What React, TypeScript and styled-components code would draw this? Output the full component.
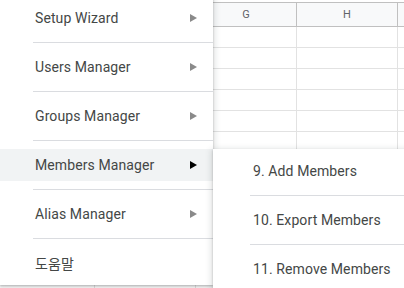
import styled, { createGlobalStyle } from 'styled-components';

const GlobalStyle = createGlobalStyle`
  html, body {
    margin: 0;
    padding: 0;
    background: #fff;
  }
  body {
    font-family: Roboto, "Noto Sans CJK KR", sans-serif;
  }
`;

// columns E and F sit under the menu and I is off to the right, so only G and H show a letter
const columns = ['', '', 'G', 'H', ''];
const rowCount = 14;

const mainItems = [
  { label: 'Setup Wizard', sub: true },
  { label: 'Users Manager', sub: true },
  { label: 'Groups Manager', sub: true },
  { label: 'Members Manager', sub: true, active: true },
  { label: 'Alias Manager', sub: true },
  { label: '도움말', sub: false },
];

const subItems = ['9. Add Members', '10. Export Members', '11. Remove Members'];

function App() {
  return (
    <>
      <GlobalStyle />
      <Page>
        <Sheet>
          <HeaderRow>
            {columns.map((c, i) => (
              <HeaderCell key={i}>{c}</HeaderCell>
            ))}
          </HeaderRow>
          {Array.from({ length: rowCount }).map((_, r) => (
            <Row key={r}>
              {columns.map((_c, i) => (
                <Cell key={i} />
              ))}
            </Row>
          ))}
        </Sheet>

        <Menu>
          {mainItems.map((item, i) => (
            <div key={item.label}>
              {i > 0 && <Separator inset={33} />}
              <Item active={item.active} pad={35}>
                <span>{item.label}</span>
                {item.sub && <Arrow active={item.active} />}
              </Item>
            </div>
          ))}
        </Menu>

        <SubMenu>
          {subItems.map((label, i) => (
            <div key={label}>
              {i > 0 && <Separator inset={37} />}
              <Item pad={40}>
                <span>{label}</span>
              </Item>
            </div>
          ))}
        </SubMenu>
      </Page>
    </>
  );
}

const Page = styled.div`
  position: relative;
  width: 404px;
  height: 288px;
  overflow: hidden;
  background: #fff;
`;

const Sheet = styled.div`
  padding-top: 2px;
  width: 600px;
`;

const gridCols = 'grid-template-columns: 95px 101px 101px 101px 101px;';

const HeaderRow = styled.div`
  display: grid;
  ${gridCols}
  height: 25px;
  box-sizing: border-box;
  border-top: 1px solid #c0c0c0;
  border-bottom: 1px solid #c0c0c0;
  background: #f8f9fa;
`;

const HeaderCell = styled.div`
  box-sizing: border-box;
  border-right: 1px solid #c0c0c0;
  display: flex;
  align-items: center;
  justify-content: center;
  font-size: 11px;
  color: #5f6368;
`;

const Row = styled.div`
  display: grid;
  ${gridCols}
  height: 21px;
  box-sizing: border-box;
  border-bottom: 1px solid #e2e2e2;
`;

const Cell = styled.div`
  box-sizing: border-box;
  border-right: 1px solid #e2e2e2;
`;

const menuShadow = `
  box-shadow: 0 1px 2px 0 rgba(60, 64, 67, 0.3), 0 2px 6px 2px rgba(60, 64, 67, 0.15);
`;

const Menu = styled.div`
  position: absolute;
  top: -4px;
  left: 0;
  width: 213px;
  padding: 6px 0;
  background: #fff;
  z-index: 1;
  ${menuShadow}
`;

const SubMenu = styled.div`
  position: absolute;
  top: 149px;
  left: 213px;
  width: 220px;
  padding: 6px 0;
  background: #fff;
  z-index: 2;
  ${menuShadow}
`;

const Item = styled.div<{ active?: boolean; pad: number }>`
  height: 32px;
  display: flex;
  align-items: center;
  justify-content: space-between;
  padding: 0 16px 0 ${({ pad }) => pad}px;
  font-size: 14px;
  letter-spacing: 0.1px;
  color: #444746;
  background: ${({ active }) => (active ? '#f1f3f4' : 'transparent')};
  white-space: nowrap;
`;

const Arrow = styled.span<{ active?: boolean }>`
  width: 0;
  height: 0;
  border-top: 4px solid transparent;
  border-bottom: 4px solid transparent;
  border-left: 7px solid ${({ active }) => (active ? '#000' : '#8a8a8a')};
`;

const Separator = styled.div<{ inset: number }>`
  height: 1px;
  margin: 8px 0 8px ${({ inset }) => inset}px;
  background: #dadce0;
`;

export default App;
